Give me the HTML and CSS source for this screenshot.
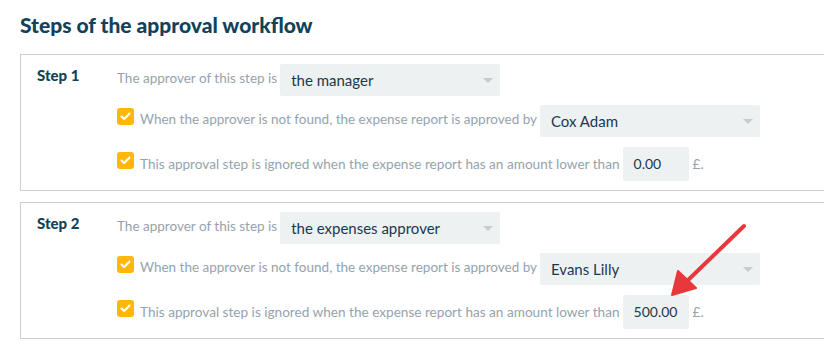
FILE: index.html
```html
<!DOCTYPE html>
<html lang="en">
<head>
<meta charset="UTF-8">
<meta name="viewport" content="width=device-width, initial-scale=1.0">
<title>Steps of the approval workflow</title>
<link rel="stylesheet" href="styles.css">
</head>
<body>
<div class="page">
    <h2 class="title">Steps of the approval workflow</h2>

    <div class="step">
        <div class="step-name">Step 1</div>
        <div class="step-body">
            <div class="row">
                <span class="label">The approver of this step is</span>
                <div class="select">the manager<span class="caret"></span></div>
            </div>
            <div class="row">
                <span class="check"><svg width="11" height="9" viewBox="0 0 11 9"><path d="M1.5 4.5 L4.2 7 L9.5 1.5" fill="none" stroke="#fff" stroke-width="2" stroke-linecap="round" stroke-linejoin="round"/></svg></span>
                <span class="label">When the approver is not found, the expense report is approved by</span>
                <div class="select">Cox Adam<span class="caret"></span></div>
            </div>
            <div class="row row-amount">
                <span class="check"><svg width="11" height="9" viewBox="0 0 11 9"><path d="M1.5 4.5 L4.2 7 L9.5 1.5" fill="none" stroke="#fff" stroke-width="2" stroke-linecap="round" stroke-linejoin="round"/></svg></span>
                <span class="label">This approval step is ignored when the expense report has an amount lower than</span>
                <div class="amount">0.00</div>
                <span class="label currency">£.</span>
            </div>
        </div>
    </div>

    <div class="step">
        <div class="step-name">Step 2</div>
        <div class="step-body">
            <div class="row">
                <span class="label">The approver of this step is</span>
                <div class="select">the expenses approver<span class="caret"></span></div>
            </div>
            <div class="row">
                <span class="check"><svg width="11" height="9" viewBox="0 0 11 9"><path d="M1.5 4.5 L4.2 7 L9.5 1.5" fill="none" stroke="#fff" stroke-width="2" stroke-linecap="round" stroke-linejoin="round"/></svg></span>
                <span class="label">When the approver is not found, the expense report is approved by</span>
                <div class="select">Evans Lilly<span class="caret"></span></div>
            </div>
            <div class="row row-amount">
                <span class="check"><svg width="11" height="9" viewBox="0 0 11 9"><path d="M1.5 4.5 L4.2 7 L9.5 1.5" fill="none" stroke="#fff" stroke-width="2" stroke-linecap="round" stroke-linejoin="round"/></svg></span>
                <span class="label">This approval step is ignored when the expense report has an amount lower than</span>
                <div class="amount">500.00</div>
                <span class="label currency">£.</span>
            </div>
        </div>
    </div>

    <!-- annotation arrow pointing at the amount -->
    <svg class="arrow" width="824" height="351" viewBox="0 0 824 351">
        <line x1="744" y1="226" x2="684" y2="284" stroke="#e8383b" stroke-width="4" stroke-linecap="round"/>
        <polygon points="672,295 678,271 696,288" fill="#e8383b" stroke="#e8383b" stroke-width="2" stroke-linejoin="round"/>
    </svg>
</div>
</body>
</html>
```

FILE: styles.css
```css
body {
    font-family: Lato, "Open Sans", sans-serif;
    margin: 0;
    padding: 0;
    overflow: hidden;
    background: #fff;
}
.page {
    position: relative;
    padding: 12px 0 0 20px;
}
.title {
    margin: 0 0 17px 0;
    font-size: 21px;
    font-weight: 900;
    color: #10435a;
    line-height: 25px;
}
.step {
    display: flex;
    border: 1px solid #cfcfcf;
    margin-right: -10px;
    margin-bottom: 11px;
    padding: 9px 0 9px 16px;
}
.step-name {
    width: 80px;
    font-size: 15px;
    font-weight: 900;
    color: #10435a;
    padding-top: 1px;
    line-height: 20px;
}
.step-body {
    display: flex;
    flex-direction: column;
    gap: 9px;
}
.row {
    display: flex;
    align-items: flex-start;
    gap: 3px;
    height: 32px;
}
.row-amount {
    height: 34px;
    margin-top: 1px;
}
.label {
    font-size: 13.5px;
    color: #95a3ad;
    line-height: 20px;
    padding-top: 4px;
    white-space: nowrap;
}
.row-amount .label {
    padding-top: 7px;
    font-size: 13.6px;
}
.check {
    width: 17px;
    height: 17px;
    margin-top: 3px;
    margin-right: 3px;
    border-radius: 3px;
    background: #ffb808;
    display: flex;
    align-items: center;
    justify-content: center;
}
.row-amount .check {
    margin-top: 5px;
}
.select {
    position: relative;
    width: 209px;
    height: 32px;
    padding-left: 11px;
    background: #eef1f2;
    border-radius: 2px;
    font-size: 15px;
    line-height: 33px;
    color: #183a4c;
}
.caret {
    position: absolute;
    right: 7px;
    top: 14px;
    border-left: 5px solid transparent;
    border-right: 5px solid transparent;
    border-top: 5px solid #c6cbce;
}
.amount {
    width: 55px;
    height: 34px;
    padding-left: 11px;
    background: #eef1f2;
    border-radius: 2px;
    font-size: 14px;
    line-height: 34px;
    color: #183a4c;
}
.currency {
    margin-left: 1px;
}
.arrow {
    position: absolute;
    left: 0;
    top: 0;
    pointer-events: none;
}
```
